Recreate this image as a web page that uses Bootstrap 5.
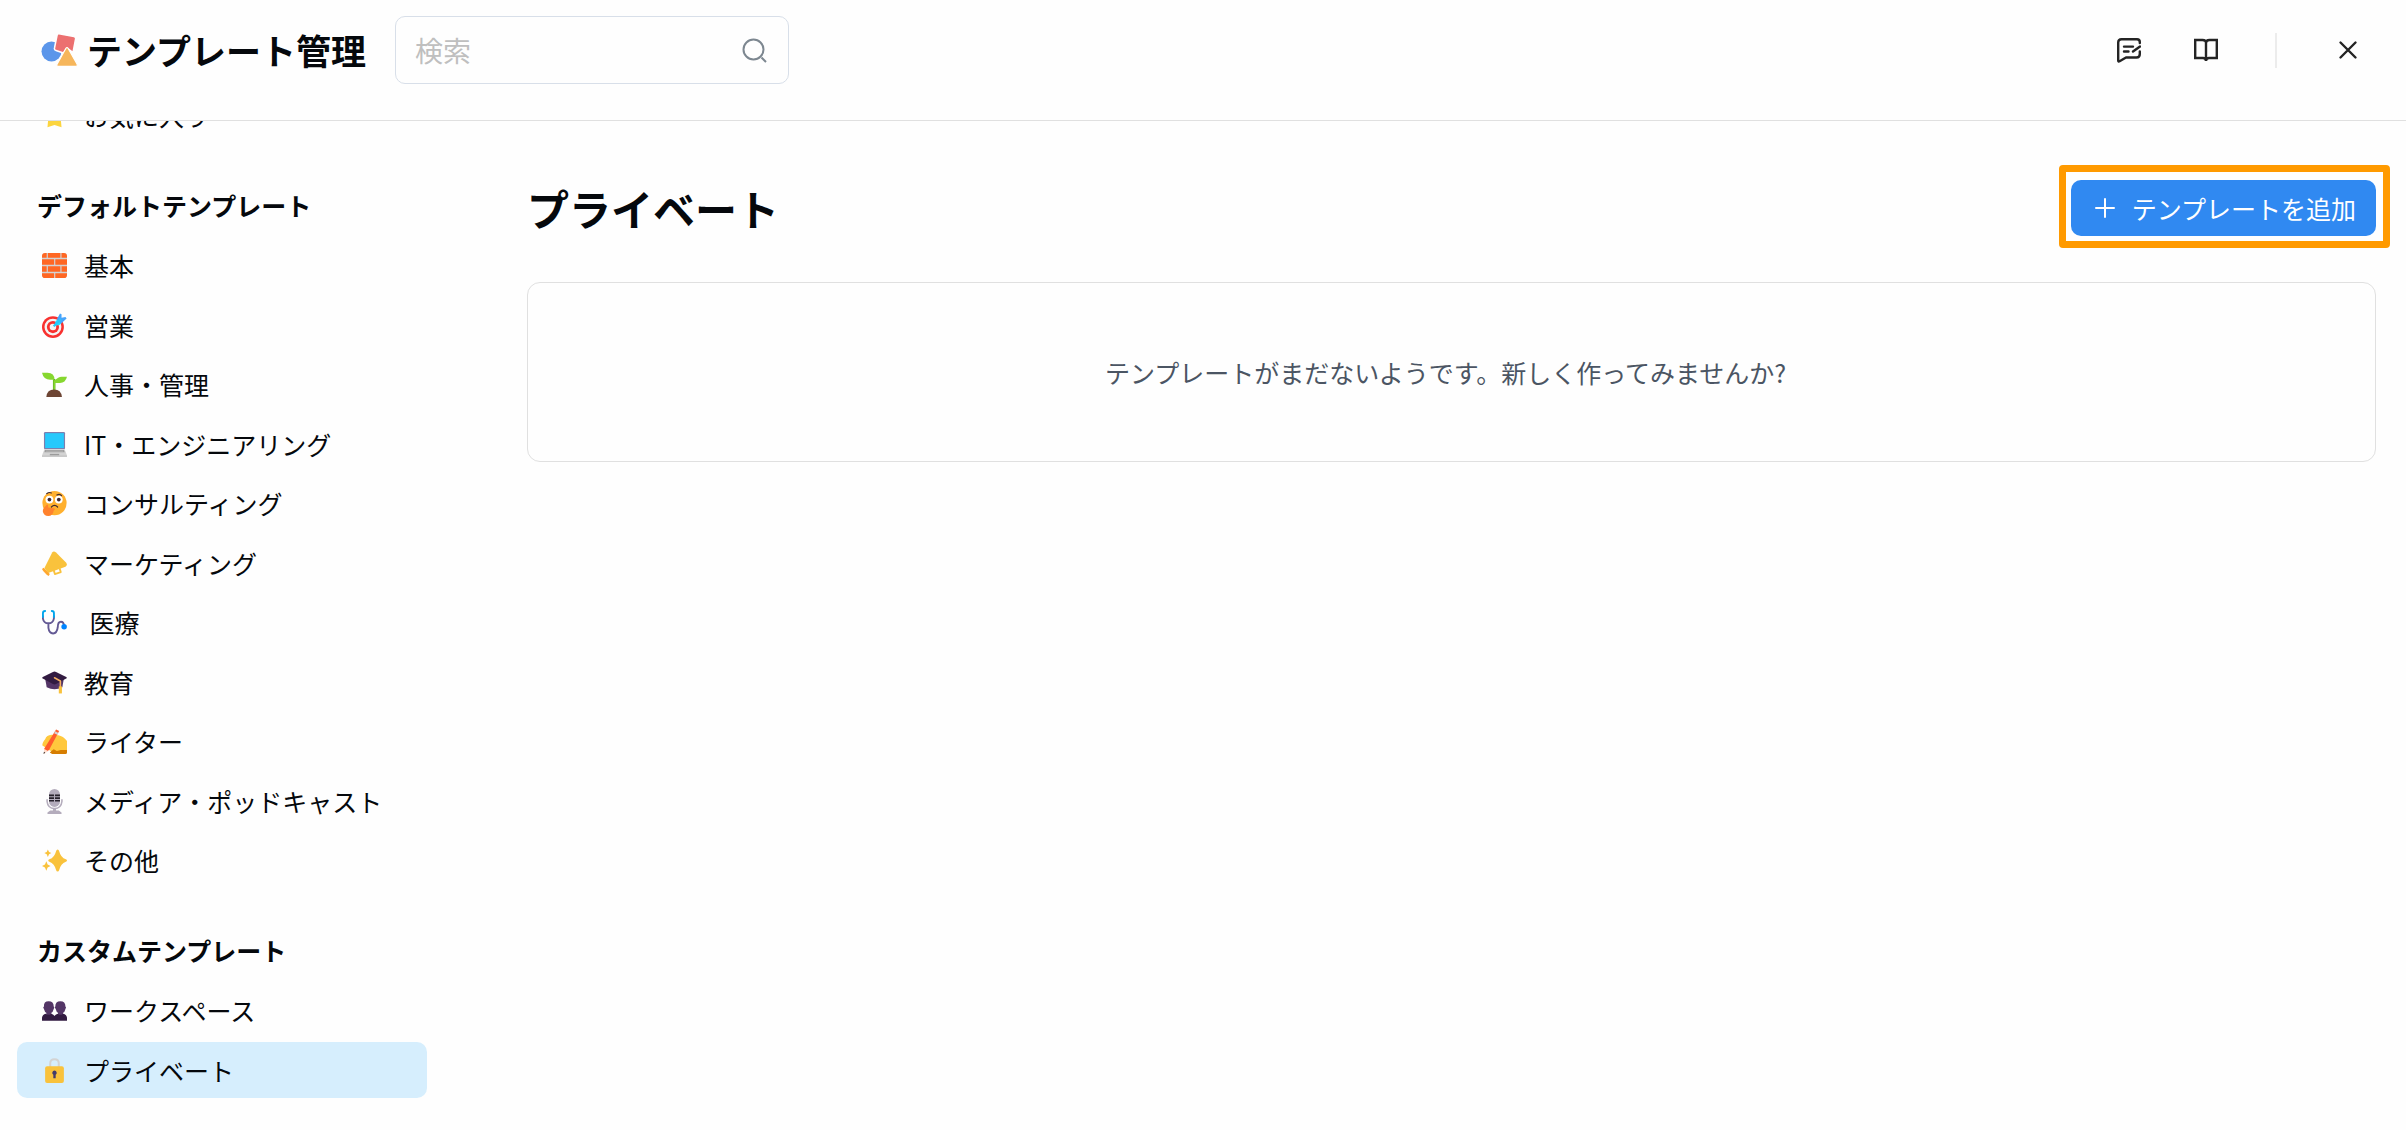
<!DOCTYPE html>
<html lang="ja">
<head>
<meta charset="utf-8">
<meta name="viewport" content="width=device-width, initial-scale=1">
<title>テンプレート管理</title>
<link href="https://cdn.jsdelivr.net/npm/bootstrap@5.3.0/dist/css/bootstrap.min.css" rel="stylesheet">
<style>
  body { font-family: "Noto Sans CJK JP", sans-serif; font-size: 25px; line-height: 36px; color: #05080c; background: #fefefe; }
  svg { display: block; flex: none; }
  .top-bar { height: 121px; padding: 16px 32px 0 41px; border-bottom: 1px solid #e0e0e0; background: #fefefe; }
  .top-row { height: 68px; }
  .app-title { font-size: 35px; line-height: 52px; font-weight: 700; margin: 0 0 0 9px; }
  .search-box { width: 394px; height: 68px; margin-left: 29px; padding: 0 21px 0 19px; border: 1px solid #d8dfe9; border-radius: 10px; }
  .search-box input { font-family: inherit; font-size: 28px; border: 0; outline: 0; background: none; padding: 0; min-width: 0; }
  .search-box input::placeholder { color: #bfbfbf; opacity: 1; }
  .tool-btn { border: 0; background: none; padding: 0; color: #242424; }
  .tool-group { gap: 53px; margin-right: 16px; }
  .tool-rule { width: 2px; height: 35px; background: #ececec; }
  .side-nav { width: 427px; padding-left: 17px; flex: none; overflow: hidden; }
  .side-scroll { margin-top: -34px; }
  .side-head { font-size: 25px; line-height: 36px; font-weight: 700; padding: 10px 20px; margin: 34px 0 4px; }
  .side-list li:nth-child(odd) { margin-bottom: 4px; }
  .side-list li:nth-child(even) { margin-bottom: 3px; }
  .side-link { height: 56px; padding: 0 25px; gap: 17px; border-radius: 10px; color: #05080c; text-decoration: none; }
  .side-link.active { background: #d6eefd; }
  .main-pane { padding: 59px 30px 40px 100px; }
  .page-title { font-size: 42px; line-height: 56px; font-weight: 700; margin: 0; }
  .add-btn { height: 56px; padding: 0 20px 0 23px; gap: 16px; border: 0; border-radius: 10px; background: #3089f1; color: #fff; }
  .callout-frame { position: absolute; inset: -15px -14px -12px -12px; border: 7px solid #ff9a00; border-radius: 4px; pointer-events: none; }
  .empty-card { height: 180px; margin-top: 46px; padding-right: 12px; border: 1px solid #e0e0e0; border-radius: 13px; color: #4b5563; }
</style>
<script src="https://cdn.jsdelivr.net/npm/bootstrap@5.3.0/dist/js/bootstrap.bundle.min.js"></script>
</head>
<body class="d-flex flex-column min-vh-100">
<header class="top-bar">
  <div class="top-row d-flex align-items-center">
    <svg width="37" height="34" viewBox="0 0 37 34" aria-hidden="true">
      <circle cx="10.500" cy="18.500" r="10" fill="#5b96ea"/>
      <path d="M18 .8 33 3.500Q35 4 34.600 6L32 19.500 27.500 16Q26 14.800 25 16.500L22.500 20 15 17.500Q13 17 13.500 15L16 2.500Q16.500.500 18 .8Z" fill="#ec7070" stroke="#fefefe" stroke-width="1.500"/>
      <path d="M24.800 15.500Q26 13.500 27.200 15.500L36 31Q37 33.300 34.500 33.300H17.500Q15 33.300 16.200 31Z" fill="#f6b65b" stroke="#fefefe" stroke-width="1.200"/>
    </svg>
    <h1 class="app-title">テンプレート管理</h1>
    <div class="search-box d-flex align-items-center">
      <input type="search" class="flex-grow-1" placeholder="検索" aria-label="検索">
      <svg width="25" height="25" viewBox="0 0 25 25" fill="none" stroke="#7d8790" stroke-width="2" aria-hidden="true"><circle cx="11.500" cy="11.500" r="10"/><path d="m19.500 19.500 4.500 4.500"/></svg>
    </div>
    <div class="tool-group d-flex align-items-center ms-auto">
      <button class="tool-btn" type="button" aria-label="フィードバック">
        <svg width="24" height="25" viewBox="0 0 24 25" fill="none" stroke="currentColor" stroke-width="2.400" stroke-linecap="round" stroke-linejoin="round"><path d="M22.800 5V4Q22.800 1.200 20 1.200H4.500Q1.200 1.200 1.200 4.500V22.500Q1.200 24 2.600 23.300L9 19.500H19.500Q22.800 19.500 22.800 16V13.500"/><path d="M7 8.600h9M7 13.500h4.500M16 13.500 23 8.500"/></svg>
      </button>
      <button class="tool-btn" type="button" aria-label="ガイド">
        <svg width="24" height="24" viewBox="0 0 24 24" fill="none" stroke="currentColor" stroke-width="2.400"><path d="M12 23V5Q12 2 8.500 2H1.200V20H9Q12 20 12 23Q12 20 15 20H22.800V2H15.500Q12 2 12 5"/></svg>
      </button>
      <div class="tool-rule ms-1"></div>
      <button class="tool-btn ms-2" type="button" aria-label="閉じる">
        <svg width="20" height="20" viewBox="0 0 20 20" fill="none" stroke="currentColor" stroke-width="2.400" stroke-linecap="round"><path d="m2.500 2.500 15 15M17.500 2.500l-15 15"/></svg>
      </button>
    </div>
  </div>
</header>

<div class="d-flex flex-grow-1">
  <nav class="side-nav" aria-label="カテゴリ">
    <div class="side-scroll">
      <ul class="side-list list-unstyled mb-0">
        <li><a class="side-link d-flex align-items-center" href="#"><svg width="25" height="25" viewBox="0 0 32 32"><path d="m16 0 5 10 11 2-8 8 1 11-9-3-9 3 1-11-8-8 11-2Z" fill="#fcd53f"/></svg><span>お気に入り</span></a></li>
      </ul>
      <h2 class="side-head">デフォルトテンプレート</h2>
      <ul class="side-list list-unstyled mb-0">
        <li><a class="side-link d-flex align-items-center" href="#"><svg width="25" height="25" viewBox="0 0 32 32"><rect width="32" height="32" rx="4" fill="#d3d3d3"/><g fill="#ff6723"><path d="M4 0h2v6H0V4Q0 0 4 0ZM7.500 0h16v6h-16ZM25 0h3q4 0 4 4v2h-7ZM0 8h15.500v7H0ZM17 8h15v7H17ZM0 17h6v7H0ZM7.500 17h16v7h-16ZM25 17h7v7h-7ZM0 26h15.500v6H4Q0 32 0 28ZM17 26h15v2q0 4-4 4H17Z"/></g></svg><span>基本</span></a></li>
        <li><a class="side-link d-flex align-items-center" href="#"><svg width="25" height="25" viewBox="0 0 32 32"><circle cx="14" cy="18" r="14" fill="#f8312f"/><circle cx="14" cy="18" r="10.800" fill="#f4f4f4"/><circle cx="14" cy="18" r="7.800" fill="#f8312f"/><circle cx="14" cy="18" r="4.200" fill="#f4f4f4"/><path d="m15 17 3-7 5-4 4 4-4 5Z" fill="#26d9fc"/><path d="m19 8 4-7.500 2 1V6l5-1 1.500 2-7 6.500Z" fill="#46a4fb"/><path d="m15 17 9-9" stroke="#26c9fc" stroke-width="3"/></svg><span>営業</span></a></li>
        <li><a class="side-link d-flex align-items-center" href="#"><svg width="25" height="25" viewBox="0 0 32 32"><path d="M14 9h3v14h-3Z" fill="#44911b"/><path d="M0 1h7q9 0 9 9v1q5-5 9-5h7q-2 8-9 8h-6v9h-2.500V10h-4Q2 10 0 1Z" fill="#86d72f"/><path d="M5.500 32q1-9.500 10-9.500t10 9.500Z" fill="#6d4534"/></svg><span>人事・管理</span></a></li>
        <li><a class="side-link d-flex align-items-center" href="#"><svg width="25" height="25" viewBox="0 0 32 32"><rect x="2.500" width="27" height="22" rx="1.500" fill="#7d7fae"/><rect x="4" y="1.500" width="24" height="19" fill="#26c9fc"/><path d="M3 22h26l3 8v2H0v-2Z" fill="#d3d3d3"/><path d="M4 23h24l1 3H3Z" fill="#9b9b9b"/><path d="M5 24.500h22M0 30.800h32" stroke="#bebebe" stroke-width="1"/><path d="M10 28h12v1.800H10Z" fill="#9b9b9b"/></svg><span>IT・エンジニアリング</span></a></li>
        <li><a class="side-link d-flex align-items-center" href="#"><svg width="25" height="25" viewBox="0 0 32 32"><circle cx="16" cy="15.500" r="15.500" fill="#ffb02e"/><circle cx="9.500" cy="11" r="5" fill="#fff"/><circle cx="21.500" cy="11" r="5" fill="#fff"/><circle cx="9.500" cy="11" r="2.400" fill="#402a32"/><circle cx="21.500" cy="11" r="2.400" fill="#402a32"/><path d="M6 3.500q3-2.500 6-1M19 5q4-2 6 1M12 20.500q4-4 8 0" fill="none" stroke="#402a32" stroke-width="1.500" stroke-linecap="round"/><path d="M5 19q3-4 3 2l7 1q3 1 0 3-1 7-7 7-6 0-7-6 0-4 4-7Z" fill="#ff822d"/></svg><span>コンサルティング</span></a></li>
        <li><a class="side-link d-flex align-items-center" href="#"><svg width="25" height="25" viewBox="0 0 32 32"><path d="m15 24.500 1.500 5 7.500-2.500-1.500-5" fill="none" stroke="#f9c23c" stroke-width="2.400" stroke-linejoin="round"/><path d="M13 2q2-3 5 0l13 13q2 3-1 5L8 28l-5-6Z" fill="#f9c23c"/><path d="m0 23 2-1.500 8 8L8.500 32 6 30.500 1.500 25.500Z" fill="#ffa72e"/></svg><span>マーケティング</span></a></li>
        <li><a class="side-link d-flex align-items-center" href="#"><svg width="25" height="25" viewBox="0 0 32 32" fill="none" stroke-width="2.400" stroke-linecap="round"><path d="M1.200 8v3q1 6 7 6t7-6V8M8.200 17v6q1 7 6 7t6-8q0-7 4-7t4 6" stroke="#635994"/><path d="M4 1.200q-2.800 0-2.800 3V9M12.500 1.200q2.800 0 2.800 3V9" stroke="#00a6ed"/><circle cx="28.300" cy="21.500" r="3.500" fill="#0084ff" stroke="none"/></svg><span>&nbsp;医療</span></a></li>
        <li><a class="side-link d-flex align-items-center" href="#"><svg width="25" height="25" viewBox="0 0 32 32"><path d="M4 11h24l-2 11q-10 5-20 0Z" fill="#533566"/><path d="M14 2.500q2-1 4 0l13 6.500q1.500 1 0 2l-13 7q-2 1-4 0L1 11Q-.500 10 1 9Z" fill="#321b41"/><path d="m16 10 7.500 4V27" fill="none" stroke="#f3ad61" stroke-width="2" stroke-linecap="round"/><path d="M21.500 21h4v9h-4Z" fill="#f9c23c"/></svg><span>教育</span></a></li>
        <li><a class="side-link d-flex align-items-center" href="#"><svg width="25" height="25" viewBox="0 0 32 32"><path d="M4 13q2-5 8-5.500l9 .5q6 1 11 7.500v14H14L9 27 5 24 .500 21Q0 18 4 13Z" fill="#ffc83d"/><path d="m12 28 3-2 4 2 5-1h8v3q0 2-2 2H13l-3-2Z" fill="#d67d00"/><path d="m18 .500 4 2L9 27l-5 3-1-5Z" fill="#ff5c2b"/><path d="m17 3 4 2-1.500 2.500-4-2Z" fill="#d3d3d3"/><path d="m3 25.500 4.500 2.500L3 32H2Z" fill="#ffdfcf"/><path d="m2.500 29 1.500 1.500L2 32Z" fill="#212121"/></svg><span>ライター</span></a></li>
        <li><a class="side-link d-flex align-items-center" href="#"><svg width="25" height="25" viewBox="0 0 32 32"><rect x="9" width="14" height="23" rx="7" fill="#b4acbc"/><path d="M9 7h14v9H9Z" fill="#26202b"/><path d="M9 10h14M9 13.300h14M16 6.500v10" stroke="#b4acbc" stroke-width="1.300"/><path d="M6.500 13v3q1 9 9.500 9t9.500-9v-3" fill="none" stroke="#b4acbc" stroke-width="2"/><path d="M14 25h4v2.500h3.500L25 30v2H7v-2l3.500-2.500H14Z" fill="#b4acbc"/></svg><span>メディア・ポッドキャスト</span></a></li>
        <li><a class="side-link d-flex align-items-center" href="#"><svg width="25" height="25" viewBox="0 0 32 32" fill="#f9c23c"><path d="M20 2q1.500 0 2 2 2 8 8.500 10.500 1.500.500 1.500 1.500t-1.500 1.500Q24 20 22 28q-.500 2-2 2t-2-2q-2-8-8.500-10.500Q8 17 8 16t1.500-1.500Q16 12 18 4q.500-2 2-2ZM7.500 2l1.500 3 3 1.500L9 8l-1.500 3.500L6 8 3 6.500 6 5ZM5.500 17l1.700 4 3.800 2-3.800 2-1.700 4-1.700-4L0 23l3.800-2Z"/></svg><span>その他</span></a></li>
      </ul>
      <h2 class="side-head">カスタムテンプレート</h2>
      <ul class="side-list list-unstyled mb-0">
        <li><a class="side-link d-flex align-items-center" href="#"><svg width="25" height="25" viewBox="0 0 32 32"><g fill="#533566"><path d="M2.500 11Q2 4 8.500 4T15 11q1.500 1 0 3-1 4-3 5v4H5.500v-4q-2-1-3-5-2-2 0-3ZM17 11q0-7 6.500-7T30 11q1.500 1 0 3-1 4-3 5v4h-6.500v-4q-2-1-3-5-2-2-.500-3Z"/></g><path d="M0 29v-3q0-5 5-6 3 3 7 0 3 1 4 3 1-2 4-3 4 3 7 0 5 1 5 6v3Z" fill="#321b41"/></svg><span>ワークスペース</span></a></li>
        <li><a class="side-link active d-flex align-items-center" href="#" aria-current="page"><svg width="25" height="25" viewBox="0 0 32 32"><path d="M10.500 13V7q0-5.500 5.500-5.500T21.500 7v6" fill="none" stroke="#d3d3d3" stroke-width="2.600"/><rect x="4" y="10.500" width="24" height="21.500" rx="2.500" fill="#f9c23c"/><path d="M16 16a3 3 0 0 1 1.500 5.500V26h-3v-4.500A3 3 0 0 1 16 16Z" fill="#433b6b"/></svg><span>プライベート</span></a></li>
      </ul>
    </div>
  </nav>

  <main class="main-pane flex-grow-1">
    <div class="d-flex align-items-center justify-content-between">
      <h2 class="page-title">プライベート</h2>
      <div class="position-relative">
        <button class="add-btn d-flex align-items-center" type="button">
          <svg width="22" height="22" viewBox="0 0 22 22" stroke="#fff" stroke-width="2" stroke-linecap="round" aria-hidden="true"><path d="M11 2v18M2 11h18"/></svg>
          <span>テンプレートを追加</span>
        </button>
        <div class="callout-frame"></div>
      </div>
    </div>
    <div class="empty-card d-flex align-items-center justify-content-center">テンプレートがまだないようです。新しく作ってみませんか?</div>
  </main>
</div>
</body>
</html>
